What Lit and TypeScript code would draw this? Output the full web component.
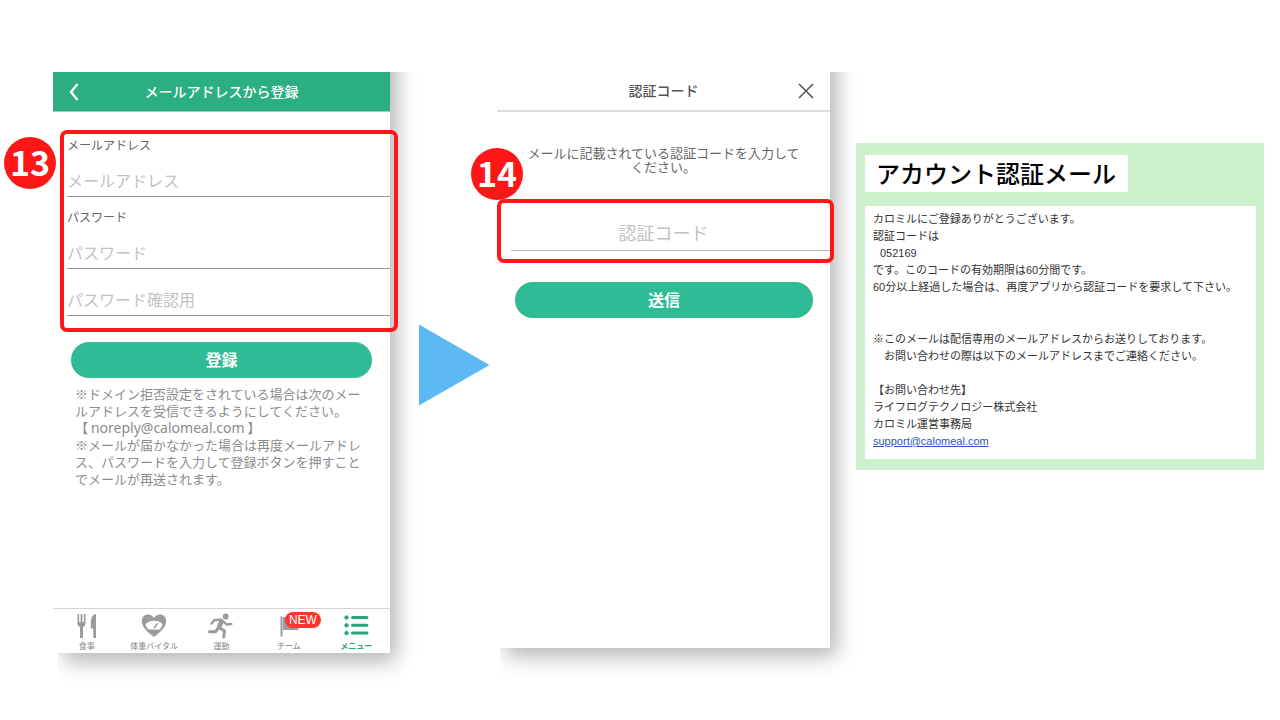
import { LitElement, html, css, svg } from "lit";
import { customElement } from "lit/decorators.js";

const shared = css`
  * {
    box-sizing: border-box;
  }
  :host {
    font-family: "Noto Sans CJK JP", sans-serif;
    color: #666;
  }
  h1,
  h2,
  p,
  fieldset {
    margin: 0;
    padding: 0;
    border: 0;
    min-width: 0;
  }
  button {
    font: inherit;
    color: inherit;
    background: none;
    border: 0;
    padding: 0;
    cursor: pointer;
  }
  svg {
    display: block;
  }
`;

const phone = css`
  :host {
    display: flex;
    flex-direction: column;
    position: relative;
    isolation: isolate;
    background: #fff;
  }
  .shadow {
    position: absolute;
    z-index: -1;
    inset: -40px 0 0 5px;
    box-shadow: 6px 8px 20px rgba(0, 0, 0, 0.3);
    clip-path: inset(40px -40px -40px 0);
    pointer-events: none;
  }
  .bar {
    display: grid;
    grid-template-columns: 48px 1fr 48px;
    align-items: center;
    height: 40px;
    text-align: center;
  }
  .bar h1 {
    grid-column: 2;
    padding-bottom: 2px;
    font-size: 14px;
    line-height: 20px;
    font-weight: 500;
    white-space: nowrap;
  }
  .marked {
    border: 4px solid #ff1717;
    border-radius: 7px;
  }
  .marked input {
    display: block;
    width: 100%;
    border: 0;
    border-bottom: 1px solid #999;
    border-radius: 0;
    background: none;
    outline: 0;
    padding: 0 0 2px;
    font-family: inherit;
    color: #555;
  }
  .marked input::placeholder {
    color: #c2c2c4;
    opacity: 1;
  }
  .submit {
    height: 36px;
    padding-bottom: 2px;
    border-radius: 18px;
    background: #2fbb96;
    color: #fff;
    font-size: 16px;
    line-height: 34px;
    font-weight: 700;
  }
`;

const icons = {
  meal: svg`<svg width="28" height="26" viewBox="0 0 28 26" fill="#9b9b9b" aria-hidden="true">
    <path d="M4.500 1h1.600v8h1.500V1h1.800v8h1.500V1h1.600v9.500c0 2-.9 3-2.500 3.500v11H7V14c-1.600-.5-2.500-1.500-2.500-3.500z"/>
    <path d="M23 1v24h-2.700v-9.500h-2.500V9c0-4.500 2.200-7.500 5.200-8z"/></svg>`,
  vital: svg`<svg width="28" height="26" viewBox="0 0 28 26" aria-hidden="true">
    <path fill="#9b9b9b" d="M14 24C9 20 1.800 14.500 1.800 8.200 1.800 4.200 4.600 1.500 8 1.500c2.600 0 4.800 1.300 6 3.500 1.200-2.200 3.400-3.500 6-3.500 3.400 0 6.200 2.700 6.200 6.700C26.200 14.500 19 20 14 24z"/>
    <path fill="#fff" d="M5.500 11.200c4-4.600 13-4.600 17 0-.6 2.600-1.800 4.300-3.500 5.300H9c-1.700-1-2.900-2.700-3.500-5.300z"/>
    <path stroke="#9b9b9b" stroke-width="1.600" stroke-linecap="round" d="M14.500 14.500l2.800-3.700"/></svg>`,
  sport: svg`<svg width="28" height="28" viewBox="0 0 28 28" fill="none" stroke="#9b9b9b" stroke-linecap="round" stroke-linejoin="round" aria-hidden="true">
    <circle cx="18.700" cy="3.500" r="2.900" fill="#9b9b9b" stroke="none"/>
    <path stroke-width="2.400" d="M4.500 10.500l3-3.500 7-.2M16 8l3.500 3.500 4.800-.5"/>
    <path stroke-width="4.600" d="M14.500 8.500l-2.300 5.500"/>
    <path stroke-width="3" d="M12.500 14.500l5 3.500-.8 6M11.300 15l-2.800 3.800H2.500"/></svg>`,
  team: svg`<svg width="28" height="26" viewBox="0 0 28 26" fill="#9b9b9b" aria-hidden="true">
    <path d="M5.500 3.500h2v20h-2zM8 4h8c1 1.500 2 1.500 7.500 1.500V17H8z"/></svg>`,
  menu: svg`<svg width="28" height="26" viewBox="0 0 28 26" fill="#25a67c" stroke="#25a67c" aria-hidden="true">
    <circle cx="4.500" cy="4.500" r="1.700"/><circle cx="4.500" cy="12.300" r="1.700"/><circle cx="4.500" cy="20" r="1.700"/>
    <path stroke-width="3" stroke-linecap="round" d="M10.500 4.500h14.500M10.500 12.300h14.500M10.500 20h14.500"/></svg>`,
};

@customElement("register-screen")
class RegisterScreen extends LitElement {
  static styles = [
    shared,
    phone,
    css`
      :host {
        min-height: 581px;
      }
      .bar {
        background: #2aae82;
        color: #fff;
        border-bottom: 1px solid #8fd3bb;
      }
      .back {
        display: grid;
        place-items: center;
        height: 39px;
        padding-right: 6px;
      }
      .marked {
        margin: 18px -8px 0 7px;
        padding: 2px 4px 12px 3px;
      }
      .marked label {
        display: block;
        font-size: 12px;
        line-height: 18px;
      }
      .marked input {
        height: 32px;
        font-size: 16px;
        margin: 11px 0;
      }
      .marked input.confirm {
        margin: 15px 0 0;
      }
      .submit {
        margin: 10px 18px 0;
      }
      .note {
        margin: 7px 18px 24px 22px;
        font-size: 13px;
        line-height: 17px;
        color: #8c8c8c;
      }
      .mail {
        font-family: "Noto Sans", sans-serif;
        font-size: 14px;
        line-height: 16px;
      }
      .tabs {
        display: grid;
        grid-template-columns: repeat(5, 1fr);
        height: 45px;
        margin-top: auto;
        border-top: 1px solid #d4d4d4;
      }
      .tab {
        display: flex;
        flex-direction: column;
        align-items: center;
        justify-content: space-between;
        position: relative;
        padding: 4px 0 1px;
        font-size: 8px;
        line-height: 12px;
        font-weight: 500;
        color: #999;
        text-decoration: none;
        white-space: nowrap;
      }
      .icon {
        height: 26px;
      }
      .tab.active {
        color: #25a67c;
        font-weight: 700;
      }
      .new {
        position: absolute;
        top: 3px;
        left: 50%;
        width: 36px;
        height: 16px;
        margin-left: -4px;
        border-radius: 8px;
        background: #f8382f;
        color: #fff;
        text-align: center;
        font-family: "Liberation Sans", sans-serif;
        font-size: 12px;
        line-height: 16px;
        font-weight: 400;
      }
    `,
  ];

  render() {
    return html`
      <div class="shadow"></div>
      <header class="bar">
        <button class="back" aria-label="戻る">
          <svg width="12" height="20" viewBox="0 0 12 20" fill="none" stroke="#fff" stroke-width="2.400"><path d="M9.500 2L3 10l6.500 8" /></svg>
        </button>
        <h1>メールアドレスから登録</h1>
      </header>
      <fieldset class="marked">
        <label for="mail">メールアドレス</label>
        <input id="mail" type="email" placeholder="メールアドレス" />
        <label for="pass">パスワード</label>
        <input id="pass" type="password" placeholder="パスワード" />
        <input class="confirm" type="password" placeholder="パスワード確認用" aria-label="パスワード確認用" />
      </fieldset>
      <button class="submit">登録</button>
      <p class="note">
        ※ドメイン拒否設定をされている場合は次のメールアドレスを受信できるようにしてください。<br />【
        <span class="mail">noreply@calomeal.com</span> 】<br />※メールが届かなかった場合は再度メールアドレス、パスワードを入力して登録ボタンを押すことでメールが再送されます。
      </p>
      <nav class="tabs">
        <a class="tab" href="#meal"><span class="icon">${icons.meal}</span>食事</a>
        <a class="tab" href="#vital"><span class="icon">${icons.vital}</span>体重バイタル</a>
        <a class="tab" href="#sport"><span class="icon">${icons.sport}</span>運動</a>
        <a class="tab" href="#team"><span class="icon">${icons.team}</span>チーム<span class="new">NEW</span></a>
        <a class="tab active" href="#menu"><span class="icon">${icons.menu}</span>メニュー</a>
      </nav>
    `;
  }
}

@customElement("code-screen")
class CodeScreen extends LitElement {
  static styles = [
    shared,
    phone,
    css`
      :host {
        min-height: 576px;
      }
      .shadow {
        left: 3px;
      }
      .bar {
        border-bottom: 2px solid #dcdcdc;
        color: #555;
      }
      .close {
        grid-column: 3;
        display: grid;
        place-items: center;
        height: 38px;
      }
      .message {
        margin-top: 34px;
        text-align: center;
        font-size: 13px;
        line-height: 14px;
      }
      .marked {
        margin: 25px -4px 0 0;
        padding: 12px 0 8px 10px;
      }
      .marked input {
        height: 36px;
        padding-right: 14px;
        text-align: center;
        font-size: 18px;
        border-color: #b4b4b4;
      }
      .submit {
        margin: 19px 17px 0 18px;
      }
    `,
  ];

  render() {
    return html`
      <div class="shadow"></div>
      <header class="bar">
        <h1>認証コード</h1>
        <button class="close" aria-label="閉じる">
          <svg width="16" height="16" viewBox="0 0 16 16" fill="none" stroke="#555" stroke-width="1.500"><path d="M1 1l14 14M15 1L1 15" /></svg>
        </button>
      </header>
      <p class="message">メールに記載されている認証コードを入力して<br />ください。</p>
      <fieldset class="marked">
        <input type="text" placeholder="認証コード" aria-label="認証コード" />
      </fieldset>
      <button class="submit">送信</button>
    `;
  }
}

@customElement("mail-card")
class MailCard extends LitElement {
  static styles = [
    shared,
    css`
      :host {
        display: flex;
        flex-direction: column;
        gap: 14px;
        padding: 12px 8px 11px 9px;
        background: #cdf1cd;
      }
      h2 {
        align-self: flex-start;
        padding: 0 12px 2px 11px;
        background: #fff;
        color: #000;
        font-size: 24px;
        line-height: 35px;
        font-weight: 500;
        white-space: nowrap;
      }
      .body {
        padding: 5px 0 9px 8px;
        background: #fff;
        color: #333;
        font-family: "Liberation Sans", "Noto Sans CJK JP", sans-serif;
        font-size: 11px;
        line-height: 17px;
      }
      .terms {
        margin-top: 35px;
      }
      .contact {
        margin-top: 17px;
      }
      .code {
        padding-left: 7px;
      }
      a {
        color: #2457c5;
      }
    `,
  ];

  render() {
    return html`
      <h2>アカウント認証メール</h2>
      <div class="body">
        <p>カロミルにご登録ありがとうございます。<br />認証コードは</p>
        <p class="code">052169</p>
        <p>です。このコードの有効期限は60分間です。<br />60分以上経過した場合は、再度アプリから認証コードを要求して下さい。</p>
        <p class="terms">※このメールは配信専用のメールアドレスからお送りしております。<br />　お問い合わせの際は以下のメールアドレスまでご連絡ください。</p>
        <p class="contact">【お問い合わせ先】<br />ライフログテクノロジー株式会社<br />カロミル運営事務局<br /><a href="mailto:support@calomeal.com">support@calomeal.com</a></p>
      </div>
    `;
  }
}

@customElement("app-root")
class AppRoot extends LitElement {
  static styles = [
    shared,
    css`
      :host {
        display: block;
        min-height: 100vh;
        background: #fff;
      }
      .flow {
        display: grid;
        grid-template-columns: 337fr 107fr 333fr 26fr 408fr;
        align-items: start;
        padding: 72px 16px 60px 53px;
      }
      .panel {
        position: relative;
      }
      .step {
        position: absolute;
        width: 52px;
        height: 52px;
        border-radius: 50%;
        background: #ff1717;
        color: #fff;
        text-align: center;
        font-size: 34px;
        line-height: 50px;
        font-weight: 700;
      }
      .first {
        top: 65px;
        left: -49px;
      }
      .second {
        top: 76px;
        left: -26px;
      }
      .arrow {
        justify-self: end;
        padding: 252px 7px 0 0;
      }
      .mail {
        grid-column: 5;
        margin-top: 71px;
      }
    `,
  ];

  render() {
    return html`
      <main class="flow" lang="ja">
        <section class="panel">
          <register-screen></register-screen>
          <span class="step first">13</span>
        </section>
        <div class="arrow">
          <svg width="71" height="82" viewBox="0 0 71 82" fill="#5cb9f4" aria-hidden="true"><path d="M0 0.500L70.500 41L0 81.500z" /></svg>
        </div>
        <section class="panel">
          <code-screen></code-screen>
          <span class="step second">14</span>
        </section>
        <mail-card class="mail"></mail-card>
      </main>
    `;
  }
}
